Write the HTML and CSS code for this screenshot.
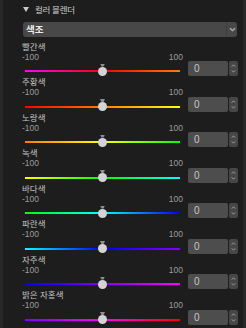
FILE: index.html
```html
<!DOCTYPE html>
<html lang="ko">
<head>
<meta charset="utf-8">
<link rel="stylesheet" href="styles.css">
</head>
<body>
<div class="panel">
  <div class="header"><span class="tri"></span><span class="title">컬러 블렌더</span></div>
  <div class="dropdown">
    <span class="dd-text">색조</span>
    <span class="dd-btn"><svg width="7" height="5" viewBox="0 0 7 5"><path d="M1 1.2 L3.5 3.6 L6 1.2" fill="none" stroke="#b4b4b4" stroke-width="1.3"/></svg></span>
  </div>

  <div class="row">
    <div class="label">빨간색</div>
    <div class="body">
      <div class="left">
        <div class="scale"><span>-100</span><span>100</span></div>
        <div class="slider"><div class="track g1"></div><span class="tick"></span><span class="thumb"></span></div>
      </div>
      <div class="right"><div class="num">0</div><div class="spin"><svg width="5" height="11" viewBox="0 0 5 11"><path d="M0.8 3.6 L2.5 1.8 L4.2 3.6 M0.8 7.4 L2.5 9.2 L4.2 7.4" fill="none" stroke="#a8a8a8" stroke-width="0.9"/></svg></div></div>
    </div>
  </div>

  <div class="row">
    <div class="label">주황색</div>
    <div class="body">
      <div class="left">
        <div class="scale"><span>-100</span><span>100</span></div>
        <div class="slider"><div class="track g2"></div><span class="tick"></span><span class="thumb"></span></div>
      </div>
      <div class="right"><div class="num">0</div><div class="spin"><svg width="5" height="11" viewBox="0 0 5 11"><path d="M0.8 3.6 L2.5 1.8 L4.2 3.6 M0.8 7.4 L2.5 9.2 L4.2 7.4" fill="none" stroke="#a8a8a8" stroke-width="0.9"/></svg></div></div>
    </div>
  </div>

  <div class="row">
    <div class="label">노랑색</div>
    <div class="body">
      <div class="left">
        <div class="scale"><span>-100</span><span>100</span></div>
        <div class="slider"><div class="track g3"></div><span class="tick"></span><span class="thumb"></span></div>
      </div>
      <div class="right"><div class="num">0</div><div class="spin"><svg width="5" height="11" viewBox="0 0 5 11"><path d="M0.8 3.6 L2.5 1.8 L4.2 3.6 M0.8 7.4 L2.5 9.2 L4.2 7.4" fill="none" stroke="#a8a8a8" stroke-width="0.9"/></svg></div></div>
    </div>
  </div>

  <div class="row">
    <div class="label">녹색</div>
    <div class="body">
      <div class="left">
        <div class="scale"><span>-100</span><span>100</span></div>
        <div class="slider"><div class="track g4"></div><span class="tick"></span><span class="thumb"></span></div>
      </div>
      <div class="right"><div class="num">0</div><div class="spin"><svg width="5" height="11" viewBox="0 0 5 11"><path d="M0.8 3.6 L2.5 1.8 L4.2 3.6 M0.8 7.4 L2.5 9.2 L4.2 7.4" fill="none" stroke="#a8a8a8" stroke-width="0.9"/></svg></div></div>
    </div>
  </div>

  <div class="row">
    <div class="label">바다색</div>
    <div class="body">
      <div class="left">
        <div class="scale"><span>-100</span><span>100</span></div>
        <div class="slider"><div class="track g5"></div><span class="tick"></span><span class="thumb"></span></div>
      </div>
      <div class="right"><div class="num">0</div><div class="spin"><svg width="5" height="11" viewBox="0 0 5 11"><path d="M0.8 3.6 L2.5 1.8 L4.2 3.6 M0.8 7.4 L2.5 9.2 L4.2 7.4" fill="none" stroke="#a8a8a8" stroke-width="0.9"/></svg></div></div>
    </div>
  </div>

  <div class="row">
    <div class="label">파란색</div>
    <div class="body">
      <div class="left">
        <div class="scale"><span>-100</span><span>100</span></div>
        <div class="slider"><div class="track g6"></div><span class="tick"></span><span class="thumb"></span></div>
      </div>
      <div class="right"><div class="num">0</div><div class="spin"><svg width="5" height="11" viewBox="0 0 5 11"><path d="M0.8 3.6 L2.5 1.8 L4.2 3.6 M0.8 7.4 L2.5 9.2 L4.2 7.4" fill="none" stroke="#a8a8a8" stroke-width="0.9"/></svg></div></div>
    </div>
  </div>

  <div class="row">
    <div class="label">자주색</div>
    <div class="body">
      <div class="left">
        <div class="scale"><span>-100</span><span>100</span></div>
        <div class="slider"><div class="track g7"></div><span class="tick"></span><span class="thumb"></span></div>
      </div>
      <div class="right"><div class="num">0</div><div class="spin"><svg width="5" height="11" viewBox="0 0 5 11"><path d="M0.8 3.6 L2.5 1.8 L4.2 3.6 M0.8 7.4 L2.5 9.2 L4.2 7.4" fill="none" stroke="#a8a8a8" stroke-width="0.9"/></svg></div></div>
    </div>
  </div>

  <div class="row">
    <div class="label">밝은 자홍색</div>
    <div class="body">
      <div class="left">
        <div class="scale"><span>-100</span><span>100</span></div>
        <div class="slider"><div class="track g8"></div><span class="tick"></span><span class="thumb"></span></div>
      </div>
      <div class="right"><div class="num">0</div><div class="spin"><svg width="5" height="11" viewBox="0 0 5 11"><path d="M0.8 3.6 L2.5 1.8 L4.2 3.6 M0.8 7.4 L2.5 9.2 L4.2 7.4" fill="none" stroke="#a8a8a8" stroke-width="0.9"/></svg></div></div>
    </div>
  </div>
</div>
</body>
</html>
```

FILE: styles.css
```css
html, body {
  margin: 0;
  padding: 0;
  background: #1d1d1d;
}
body {
  width: 246px;
  height: 328px;
  overflow: hidden;
  font-family: "Noto Sans CJK KR", "Noto Sans", sans-serif;
  font-size: 8.5px;
  color: #c4c4c4;
}
.panel {
  box-sizing: border-box;
  height: 328px;
  border-left: 3px solid #282828;
  border-right: 3px solid #282828;
  padding: 0 5px 0 19px;
}
.header {
  height: 18px;
  line-height: 18px;
  margin-bottom: 4px;
  display: flex;
  align-items: center;
  padding-left: 1px;
}
.tri {
  width: 0;
  height: 0;
  border-left: 3px solid transparent;
  border-right: 3px solid transparent;
  border-top: 5px solid #c8c8c8;
  margin-right: 6px;
}
.title {
  font-size: 8.5px;
  color: #cfcfcf;
  letter-spacing: -0.3px;
}
.dropdown {
  width: 214px;
  height: 15px;
  margin-left: 1px;
  background: #484848;
  border-radius: 3px;
  display: flex;
  align-items: center;
  margin-bottom: 3.5px;
}
.dd-text {
  flex: 1;
  padding-left: 3px;
  font-size: 9.5px;
  font-weight: bold;
  color: #ececec;
  line-height: 15px;
}
.dd-btn {
  width: 10px;
  height: 15px;
  border-left: 1px solid #3e3e3e;
  display: flex;
  align-items: center;
  justify-content: center;
}
.row {
  height: 35.5px;
}
.label {
  height: 11px;
  line-height: 11px;
  color: #c4c4c4;
  white-space: nowrap;
}
.body {
  display: flex;
}
.left {
  width: 161px;
}
.scale {
  height: 10px;
  line-height: 10px;
  display: flex;
  justify-content: space-between;
  color: #9c9c9c;
  font-family: "Liberation Sans", sans-serif;
  font-size: 8.5px;
}
.slider {
  box-sizing: border-box;
  position: relative;
  height: 14.5px;
  padding: 8.5px 3px 0 3px;
}
.track {
  height: 2px;
}
.thumb {
  position: absolute;
  left: 76px;
  top: 5px;
  width: 9px;
  height: 9px;
  border-radius: 50%;
  background: #d4d4d4;
}
.tick {
  position: absolute;
  left: 78px;
  top: 2px;
  width: 5px;
  height: 3px;
  background: #8e8e8e;
  clip-path: polygon(0 0, 100% 0, 70% 100%, 30% 100%);
}
.right {
  display: flex;
  align-items: flex-end;
  margin-left: 5px;
  gap: 1px;
  height: 24.5px;
}
.num {
  box-sizing: border-box;
  width: 40px;
  height: 15px;
  background: #4d4d4d;
  border-radius: 2px;
  padding-left: 6px;
  line-height: 15px;
  font-family: "Liberation Sans", sans-serif;
  font-size: 10px;
  color: #c6c6c6;
}
.spin {
  width: 9px;
  height: 15px;
  background: #474747;
  border-radius: 2px;
  display: flex;
  align-items: center;
  justify-content: center;
}
.g1 { background: linear-gradient(to right, #ff00ff, #ff0000 50%, #ff7a00); }
.g2 { background: linear-gradient(to right, #ff0000, #ff7f00 50%, #ffff00); }
.g3 { background: linear-gradient(to right, #ff7f00, #ffff00 50%, #00ff00); }
.g4 { background: linear-gradient(to right, #ffff00, #00ff00 50%, #00ffff); }
.g5 { background: linear-gradient(to right, #00ff00, #00ffff 50%, #0000ff); }
.g6 { background: linear-gradient(to right, #00ffff, #0000ff 50%, #8000ff); }
.g7 { background: linear-gradient(to right, #0000ff, #8000ff 50%, #ff00ff); }
.g8 { background: linear-gradient(to right, #8000ff, #ff00ff 50%, #ff0000); }
```
